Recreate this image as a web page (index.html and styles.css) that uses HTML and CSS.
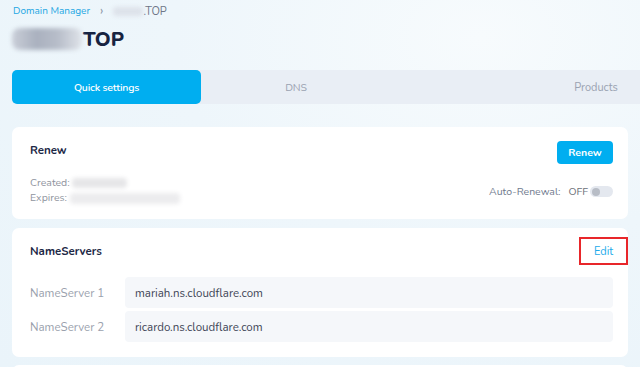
FILE: index.html
```html
<!DOCTYPE html>
<html lang="en">
<head>
    <meta charset="UTF-8">
    <title>Domain Manager - TOP</title>
    <link rel="stylesheet" href="styles.css">
</head>
<body>
    <div class="page">
        <div class="crumbs">
            <a href="#">Domain Manager</a>
            <span class="sep">&rsaquo;</span>
            <span class="blur blur-crumb"></span><span class="crumb-cur">.TOP</span>
        </div>

        <h1 class="title"><span class="blur blur-title"></span>TOP</h1>

        <div class="tabs">
            <div class="tab active">Quick settings</div>
            <div class="tab">DNS</div>
            <div class="tab wide">Products</div>
        </div>

        <div class="card renew-card">
            <div class="card-row">
                <h2>Renew</h2>
                <button class="btn">Renew</button>
            </div>
            <div class="card-row bottom">
                <div class="dates">
                    <div>Created: <span class="blur blur-created"></span></div>
                    <div>Expires: <span class="blur blur-expires"></span></div>
                </div>
                <div class="auto">
                    <span>Auto-Renewal:</span>
                    <span class="off">OFF</span>
                    <span class="toggle"><span class="knob"></span></span>
                </div>
            </div>
        </div>

        <div class="card ns-card">
            <div class="card-row">
                <h2>NameServers</h2>
                <a href="#" class="edit">Edit</a>
            </div>
            <div class="ns-list">
                <div class="ns-row">
                    <span class="ns-label">NameServer 1</span>
                    <div class="ns-value">mariah.ns.cloudflare.com</div>
                </div>
                <div class="ns-row">
                    <span class="ns-label">NameServer 2</span>
                    <div class="ns-value">ricardo.ns.cloudflare.com</div>
                </div>
            </div>
        </div>

        <div class="card next-card"></div>
    </div>
</body>
</html>
```

FILE: styles.css
```css
html, body {
    margin: 0;
    padding: 0;
    height: 100%;
    overflow: hidden;
}

body {
    font-family: "Nunito", Lato, "Noto Sans", sans-serif;
    background: radial-gradient(ellipse at 75% 10%, #f7fbfd 0%, #eef6fb 45%, #eaf4fa 100%);
    color: #1c2745;
}

.page {
    padding: 3px 0 0 12px;
}

.crumbs {
    display: flex;
    align-items: center;
    font-size: 10px;
    height: 16px;
    padding-left: 1px;
}

.crumbs a {
    color: #1ca6e3;
    text-decoration: none;
}

.sep {
    color: #8d97a8;
    margin: 0 10px 0 10px;
    font-size: 13px;
    line-height: 1;
}

.crumb-cur {
    color: #6e7687;
    font-size: 11px;
}

.blur {
    display: inline-block;
    background: #d8dde6;
    filter: blur(2px);
    border-radius: 4px;
    vertical-align: middle;
}

.blur-crumb {
    width: 30px;
    height: 9px;
    background: #dde2ea;
}

.title {
    display: flex;
    align-items: center;
    margin: 7px 0 0 0;
    height: 26px;
    font-size: 20px;
    font-weight: 800;
    color: #172341;
}

.blur-title {
    width: 70px;
    height: 22px;
    margin-right: 1px;
    background: linear-gradient(90deg, #c9ced8 0%, #aab1bf 35%, #b7bdc9 65%, #dfe3e9 100%);
    border-radius: 8px;
}

.tabs {
    display: flex;
    width: 800px;
    height: 34px;
    margin-top: 18px;
    background: #e9eef5;
    border-radius: 5px 0 0 5px;
}

.tab {
    display: flex;
    align-items: center;
    justify-content: center;
    width: 190px;
    font-size: 10.5px;
    letter-spacing: -0.2px;
    color: #9aa2b1;
}

.tab.active {
    width: 189px;
    background: #00aef0;
    color: #fff;
    font-weight: 600;
    border-radius: 5px;
}

.tab.wide {
    width: 410px;
    font-size: 11px;
    letter-spacing: 0;
}

.card {
    width: 616px;
    box-sizing: border-box;
    background: #fff;
    border-radius: 7px;
    padding: 14px 15px 0 18px;
}

.renew-card {
    margin-top: 23px;
    height: 92px;
}

.ns-card {
    margin-top: 9px;
    height: 129px;
    padding-top: 9px;
}

.next-card {
    margin-top: 8px;
    height: 20px;
}

.card-row {
    display: flex;
    justify-content: space-between;
    align-items: flex-start;
}

.card h2 {
    margin: 1px 0 0 0;
    font-size: 11.5px;
    line-height: 16px;
    font-weight: 700;
    color: #1c2745;
}

.btn {
    width: 56px;
    height: 23px;
    border: none;
    border-radius: 4px;
    background: #00aef0;
    color: #fff;
    font-family: inherit;
    font-size: 10.5px;
    font-weight: 700;
    padding: 0;
}

.card-row.bottom {
    margin-top: 11px;
    align-items: center;
}

.dates {
    font-size: 10.5px;
    color: #8f949e;
    line-height: 15px;
}

.blur-created {
    width: 55px;
    height: 10px;
    background: #e6e6e8;
}

.blur-expires {
    width: 110px;
    height: 11px;
    background: #ececee;
}

.auto {
    display: flex;
    align-items: center;
    font-size: 10.5px;
    color: #707a8e;
    margin-top: 3px;
}

.off {
    margin-left: 8px;
    color: #6b6f78;
}

.toggle {
    width: 23px;
    height: 11px;
    margin-left: 2px;
    background: #e4e8ef;
    border-radius: 6px;
    display: flex;
    align-items: center;
    padding-left: 2px;
    box-sizing: border-box;
}

.knob {
    width: 8px;
    height: 8px;
    border-radius: 50%;
    background: #b8bdc6;
}

.ns-card .card-row {
    height: 28px;
    align-items: center;
}

.ns-card h2 {
    margin-top: 0;
}

.edit {
    display: flex;
    align-items: center;
    justify-content: center;
    width: 45px;
    height: 24px;
    margin-right: -15px;
    border: 2px solid #e8262a;
    color: #22aaea;
    font-size: 11px;
    text-decoration: none;
}

.ns-list {
    display: flex;
    flex-direction: column;
    gap: 3px;
    margin-top: 12px;
}

.ns-row {
    display: flex;
    align-items: center;
}

.ns-label {
    width: 95px;
    font-size: 11.5px;
    color: #9aa1ad;
}

.ns-value {
    flex: 1;
    height: 31px;
    display: flex;
    align-items: center;
    padding-left: 10px;
    background: #f5f7fa;
    border-radius: 4px;
    font-size: 11.5px;
    color: #3e4556;
}
```
